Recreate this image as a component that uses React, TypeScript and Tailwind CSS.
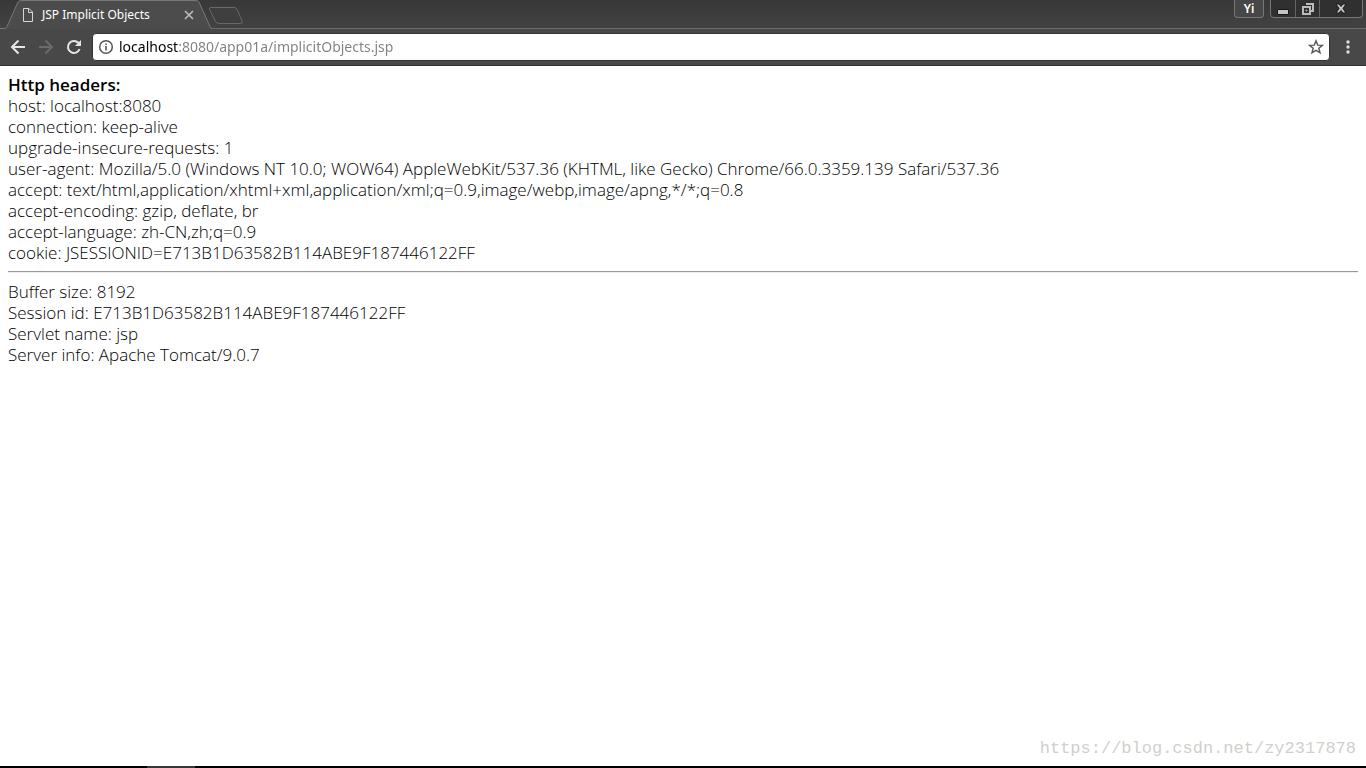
import React from "react";

const headers = [
  { name: "host", value: "localhost:8080" },
  { name: "connection", value: "keep-alive" },
  { name: "upgrade-insecure-requests", value: "1" },
  {
    name: "user-agent",
    value:
      "Mozilla/5.0 (Windows NT 10.0; WOW64) AppleWebKit/537.36 (KHTML, like Gecko) Chrome/66.0.3359.139 Safari/537.36",
  },
  {
    name: "accept",
    value:
      "text/html,application/xhtml+xml,application/xml;q=0.9,image/webp,image/apng,*/*;q=0.8",
  },
  { name: "accept-encoding", value: "gzip, deflate, br" },
  { name: "accept-language", value: "zh-CN,zh;q=0.9" },
  { name: "cookie", value: "JSESSIONID=E713B1D63582B114ABE9F187446122FF" },
];

const serverInfo = [
  { name: "Buffer size", value: "8192" },
  { name: "Session id", value: "E713B1D63582B114ABE9F187446122FF" },
  { name: "Servlet name", value: "jsp" },
  { name: "Server info", value: "Apache Tomcat/9.0.7" },
];

function TabStrip() {
  return (
    <div className="flex h-7 items-start bg-gradient-to-b from-[#383838] to-[#424242]">
      <div className="relative h-[29px] w-[212px] shrink-0">
        <svg
          className="absolute inset-0"
          width="212"
          height="29"
          viewBox="0 0 212 29"
          fill="none"
        >
          <path
            d="M0 28.5H4Q6 28.5 7 26.5L18 2Q19 .5 21 .5H196Q198 .5 199 2L210 26.5Q211 28.5 212 28.5V29H0Z"
            fill="#4c4c4c"
          />
          <path
            d="M0 28.5H4Q6 28.5 7 26.5L18 2Q19 .5 21 .5H196Q198 .5 199 2L210 26.5Q211 28.5 212 28.5"
            stroke="#777"
          />
        </svg>
        <div className="relative flex h-full items-center pl-[22px]">
          <svg width="12" height="14" viewBox="0 0 12 14" fill="none" stroke="#d6d6d6">
            <path d="M1.5 .5H7L10.5 4V13.5H1.5ZM6.5 .5V4.5H10.5" />
          </svg>
          <span className="ml-2 text-xs text-white">JSP Implicit Objects</span>
          <button className="absolute left-[184px] top-[10px]" aria-label="Close tab">
            <svg width="10" height="10" viewBox="0 0 10 10" stroke="#bdbdbd" strokeWidth="1.6">
              <path d="M1 1L9 9M9 1L1 9" />
            </svg>
          </button>
        </div>
      </div>
      <button className="mt-[6px] -ml-1" aria-label="New tab">
        <svg width="36" height="19" viewBox="0 0 36 19">
          <path
            d="M3 1.5H26Q28 1.5 29 3L34 15Q35 17.5 33 17.5H11Q8.500 17.500 7.500 15.500L1.500 3.500Q1 1.500 3 1.500Z"
            fill="#3f3f3f"
            stroke="#686868"
          />
        </svg>
      </button>
      <button className="ml-auto flex h-[18px] w-[30px] items-center justify-center rounded-b border border-t-0 border-[#777] bg-[#474747] text-xs font-semibold text-white">
        Yi
      </button>
      <div className="ml-[6px] mr-[3px] flex h-[18px] rounded-b border border-t-0 border-[#777] bg-[#303030]">
        <button className="flex w-6 items-center justify-center" aria-label="Minimize">
          <svg width="12" height="14" viewBox="0 0 12 14">
            <path d="M.5 7.500H11.500V12.500H.5Z" fill="#c4c4c4" stroke="#181818" />
          </svg>
        </button>
        <button
          className="flex w-[25px] items-center justify-center border-x border-[#666]"
          aria-label="Restore"
        >
          <svg width="12" height="12" viewBox="0 0 12 12" fill="none">
            <path d="M4 1H11V8H9" stroke="#bbb" strokeWidth="2" />
            <path d="M1 4H8V11H1Z" stroke="#bbb" strokeWidth="2" />
            <path d="M4 7H5V8H4Z" stroke="#aaa" />
          </svg>
        </button>
        <button className="flex w-[42px] items-center justify-center" aria-label="Close">
          <svg width="12" height="11" viewBox="0 0 12 11">
            <path
              d="M1 1H4L6 3.500L8 1H11L8 5.500L11 10H8L6 7.500L4 10H1L4 5.500Z"
              fill="#c4c4c4"
              stroke="#181818"
            />
          </svg>
        </button>
      </div>
    </div>
  );
}

function Toolbar() {
  return (
    <div className="flex h-[38px] items-center border-b border-[#303030] bg-[#484848] shadow-[inset_0_1px_0_#686868]">
      <div className="flex items-center gap-3 pl-[10px]">
        <button aria-label="Back">
          <svg width="16" height="16" viewBox="0 0 16 16" fill="none" stroke="#e6e6e6" strokeWidth="2">
            <path d="M15 8H2.500M8.500 1.500L2 8L8.500 14.500" />
          </svg>
        </button>
        <button aria-label="Forward" disabled>
          <svg width="16" height="16" viewBox="0 0 16 16" fill="none" stroke="#6b6b6b" strokeWidth="2">
            <path d="M1 8H13.500M7.500 1.500L14 8L7.500 14.500" />
          </svg>
        </button>
        <button aria-label="Reload">
          <svg width="16" height="16" viewBox="0 0 16 16" fill="none">
            <path d="M13.600 10A6 6 0 1 1 12.300 3.800L13.500 5" stroke="#e6e6e6" strokeWidth="2" />
            <path d="M15 1V7H9Z" fill="#e6e6e6" />
          </svg>
        </button>
      </div>
      <div className="ml-[10px] flex h-[28px] flex-1 items-center rounded-sm border border-[#353535] bg-white">
        <button className="ml-[5px]" aria-label="View site information">
          <svg width="16" height="16" viewBox="0 0 16 16" fill="none">
            <circle cx="8" cy="8" r="6.300" stroke="#555" strokeWidth="1.500" />
            <path d="M8 7V11.500M8 4.500V6" stroke="#555" strokeWidth="1.600" />
          </svg>
        </button>
        {/* host in black, the rest of the address in grey */}
        <input
          type="text"
          aria-label="Address"
          defaultValue="localhost:8080/app01a/implicitObjects.jsp"
          className="ml-[5px] min-w-0 flex-1 bg-[linear-gradient(90deg,#000_60px,#808080_60px)] bg-clip-text text-sm text-transparent outline-none"
        />
        <button className="mr-[5px]" aria-label="Bookmark this page">
          <svg width="16" height="16" viewBox="0 0 16 16" fill="none">
            <path
              d="M8 1.800L9.700 6.100L14.300 6.400L10.800 9.300L12 13.800L8 11.300L4 13.800L5.200 9.300L1.700 6.400L6.300 6.100Z"
              stroke="#555"
              strokeWidth="1.400"
            />
          </svg>
        </button>
      </div>
      <button className="ml-[10px] mr-[10px]" aria-label="Menu">
        <svg width="16" height="16" viewBox="0 0 16 16" fill="#e0e0e0">
          <circle cx="8" cy="3" r="1.700" />
          <circle cx="8" cy="8" r="1.700" />
          <circle cx="8" cy="13" r="1.700" />
        </svg>
      </button>
    </div>
  );
}

export default function App() {
  return (
    <div className="flex min-h-screen flex-col bg-white font-['Noto_Sans','Open_Sans',sans-serif]">
      <TabStrip />
      <Toolbar />
      <main className="flex flex-1 flex-col px-2 pt-2 font-['Open_Sans','Noto_Sans',sans-serif] text-[17px] leading-[21px] font-[350] text-black">
        <b className="font-semibold">Http headers:</b>
        {headers.map((item) => (
          <div key={item.name}>
            {item.name}: {item.value}
          </div>
        ))}
        <hr className="my-2 h-[2px] border-t border-b border-t-[#999] border-b-[#eee]" />
        {serverInfo.map((item) => (
          <div key={item.name}>
            {item.name}: {item.value}
          </div>
        ))}
        <div className="mt-auto self-end pr-[2px] pb-[7px] font-['Liberation_Mono',monospace] font-normal text-[17px] text-[#d0d0cc]">
          https://blog.csdn.net/zy2317878
        </div>
      </main>
      <footer className="flex h-[2px] bg-black">
        <div className="ml-[147px] w-12 bg-[#383838]" />
      </footer>
    </div>
  );
}
